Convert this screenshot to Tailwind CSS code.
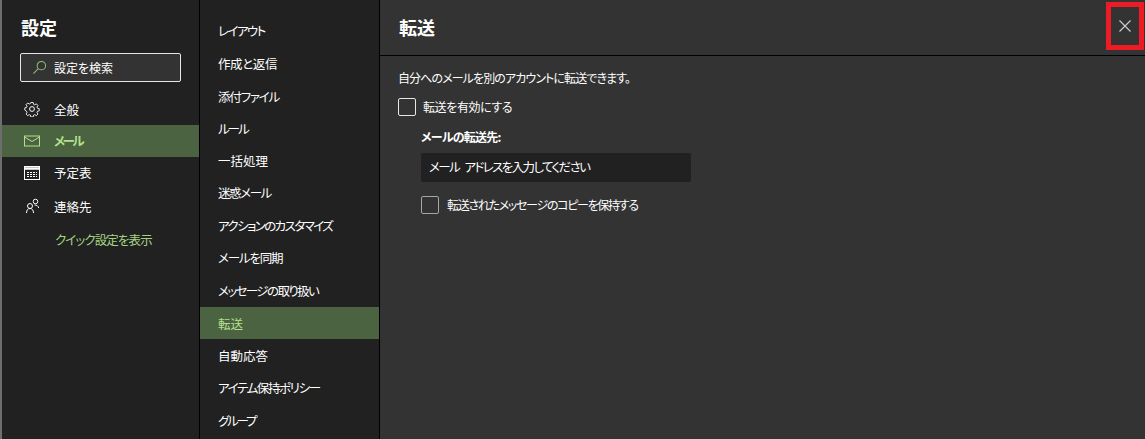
<!DOCTYPE html>
<html lang="ja">
<head>
    <meta charset="UTF-8">
    <title>設定</title>
    <script src="https://cdn.jsdelivr.net/npm/@tailwindcss/browser@4"></script>
</head>
<body class="bg-[#333333]">
    <div class="flex h-[439px] w-[1145px] overflow-hidden bg-[#333333] font-['Noto_Sans_CJK_JP',sans-serif] text-white [font-feature-settings:'palt']">
        <!-- left column -->
        <aside class="h-full w-[200px] shrink-0 border-r border-black bg-[#212121] border-l-2 border-l-[#6e6e6e]">
            <h1 class="pl-[19px] pt-[14px] text-[18px] font-bold leading-[27px]">設定</h1>
            <div class="ml-[18px] mt-[12px] flex h-[29px] w-[161px] items-center rounded-[2px] border border-[#e6e6e6] bg-[#333333] pl-[11px]">
                <svg class="h-[15px] w-[15px] text-[#8fbf70]" viewBox="0 0 16 16" fill="none" stroke="currentColor" stroke-width="1.1"><circle cx="10" cy="6" r="4.5"/><path d="M6.7 9.3 1.500 14.500"/></svg>
                <span class="ml-[7px] text-[12px]">設定を検索</span>
            </div>
            <nav class="mt-[11px] text-[12.500px]">
                <div class="flex h-[32px] items-center pl-[22px]">
                    <svg class="h-[16px] w-[16px]" viewBox="0 0 16 16" fill="none" stroke="currentColor"><circle cx="8" cy="8" r="2.400"/><path d="M6.700 1h2.600l.4 2 1.300.6 1.800-1.100 1.800 1.800-1.100 1.800.6 1.300 1.900.4v2.500l-1.900.4-.6 1.300 1.100 1.800-1.800 1.800-1.800-1.100-1.300.6-.4 2H6.700l-.4-2-1.300-.6-1.800 1.100-1.800-1.800 1.100-1.800-.6-1.300L0 9.400V6.900l1.900-.4.6-1.300-1.100-1.800 1.800-1.800L5 2.700l1.300-.6z" transform="translate(.8 .6) scale(.9)"/></svg>
                    <span class="ml-[14px] pt-[2px]">全般</span>
                </div>
                <div class="flex h-[32px] items-center bg-[#4b6340] pl-[22px] font-bold text-[#b5e08f]">
                    <svg class="h-[16px] w-[16px]" viewBox="0 0 16 16" fill="none" stroke="currentColor"><rect x=".5" y="3" width="15" height="10"/><path d="M.5 4l7.500 4.500L15.500 4"/></svg>
                    <span class="ml-[14px] tracking-[-2.400px]">メール</span>
                </div>
                <div class="flex h-[32px] items-center pl-[22px]">
                    <svg class="h-[16px] w-[16px]" viewBox="0 0 16 16" fill="none" stroke="currentColor"><rect x=".5" y="1.500" width="15" height="13"/><path d="M.5 3.500h15" stroke-width="2.500"/><path d="M3 7.500h10M3 9.500h10M3 11.500h10" stroke-dasharray="2 1"/></svg>
                    <span class="ml-[14px]">予定表</span>
                </div>
                <div class="flex h-[33px] items-center pl-[22px]">
                    <svg class="h-[16px] w-[16px]" viewBox="0 0 16 16" fill="none" stroke="currentColor"><circle cx="6" cy="8" r="2.500"/><path d="M2.500 15c0-2.800 1.300-4.500 3.500-4.500s3.500 1.700 3.500 4.500"/><circle cx="11.500" cy="3.500" r="2.300"/><path d="M10.500 7c2.300 0 3.800 1 4.200 3"/></svg>
                    <span class="ml-[14px] pt-[3px]">連絡先</span>
                </div>
                <div class="flex h-[34px] items-center pl-[53px] pt-[3px] tracking-[-0.900px] text-[#a3d483]">クイック設定を表示</div>
            </nav>
        </aside>

        <!-- category column -->
        <nav class="h-full w-[180px] shrink-0 border-r border-black bg-[#212121] pt-[15px] text-[12.500px]">
            <div class="flex h-[32.400px] items-center pl-[18px] tracking-[-1.600px]">レイアウト</div>
            <div class="flex h-[32.400px] items-center pl-[18px] pt-[1px] tracking-[-0.400px]">作成と返信</div>
            <div class="flex h-[32.400px] items-center pl-[18px] pt-[2px] tracking-[-1.200px]">添付ファイル</div>
            <div class="flex h-[32.400px] items-center pl-[18px] pt-[2px] tracking-[-2px]">ルール</div>
            <div class="flex h-[32.400px] items-center pl-[18px] pt-[1px]">一括処理</div>
            <div class="flex h-[32.400px] items-center pl-[18px] pt-[1px] tracking-[-1.400px]">迷惑メール</div>
            <div class="flex h-[32.400px] items-center pl-[18px] pt-[1px] tracking-[-1.600px]">アクションのカスタマイズ</div>
            <div class="flex h-[32.400px] items-center pl-[18px] pt-[1px] tracking-[-1.200px]">メールを同期</div>
            <div class="flex h-[32.400px] items-center pl-[18px] pt-[2px] tracking-[-1.600px]">メッセージの取り扱い</div>
            <div class="flex h-[32.400px] items-center bg-[#4b6340] pl-[18px] pt-[3px] text-[#b5e08f]">転送</div>
            <div class="flex h-[32.400px] items-center pl-[18px] pt-[2px]">自動応答</div>
            <div class="flex h-[32.400px] items-center pl-[18px] pt-[1px] tracking-[-1.400px]">アイテム保持ポリシー</div>
            <div class="flex h-[32.400px] items-center pl-[18px] pt-[2px] tracking-[-2.200px]">グループ</div>
        </nav>

        <!-- detail pane -->
        <main class="relative min-w-0 flex-1">
            <header class="flex h-[56px] items-center border-b border-black pl-[19px]">
                <h2 class="text-[18px] font-bold">転送</h2>
            </header>
            <div class="pl-[18px] pt-[13px] text-[12px]">
                <p class="leading-[18px] tracking-[-0.900px]">自分へのメールを別のアカウントに転送できます。</p>
                <label class="mt-[11px] flex items-center">
                    <span class="h-[18px] w-[18px] rounded-[2px] border border-[#e6e6e6]"></span>
                    <span class="ml-[7px] tracking-[-0.400px]">転送を有効にする</span>
                </label>
                <div class="ml-[23px] mt-[12px]">
                    <p class="font-bold leading-[18px] tracking-[-0.750px]">メールの転送先:</p>
                    <div class="mt-[7px] flex h-[29px] w-[270px] items-center rounded-[2px] bg-[#212121] pl-[8px] text-[12.500px] tracking-[-1.600px] [word-spacing:4px]">メール アドレスを入力してください</div>
                    <label class="mt-[14px] flex items-center">
                        <span class="h-[18px] w-[18px] rounded-[2px] border border-[#a6a6a6]"></span>
                        <span class="ml-[8px] tracking-[-1.300px]">転送されたメッセージのコピーを保持する</span>
                    </label>
                </div>
            </div>
            <!-- close button, red highlight box -->
            <button class="absolute right-[1px] top-[2px] flex h-[48px] w-[38px] items-center justify-center border-[5px] border-[#ed1c24]">
                <svg class="h-[12px] w-[12px] text-[#d0d0d0]" viewBox="0 0 12 12" fill="none" stroke="currentColor" stroke-width="1.100"><path d="M.5.5l11 11M11.500.5l-11 11"/></svg>
            </button>
        </main>
    </div>
</body>
</html>
